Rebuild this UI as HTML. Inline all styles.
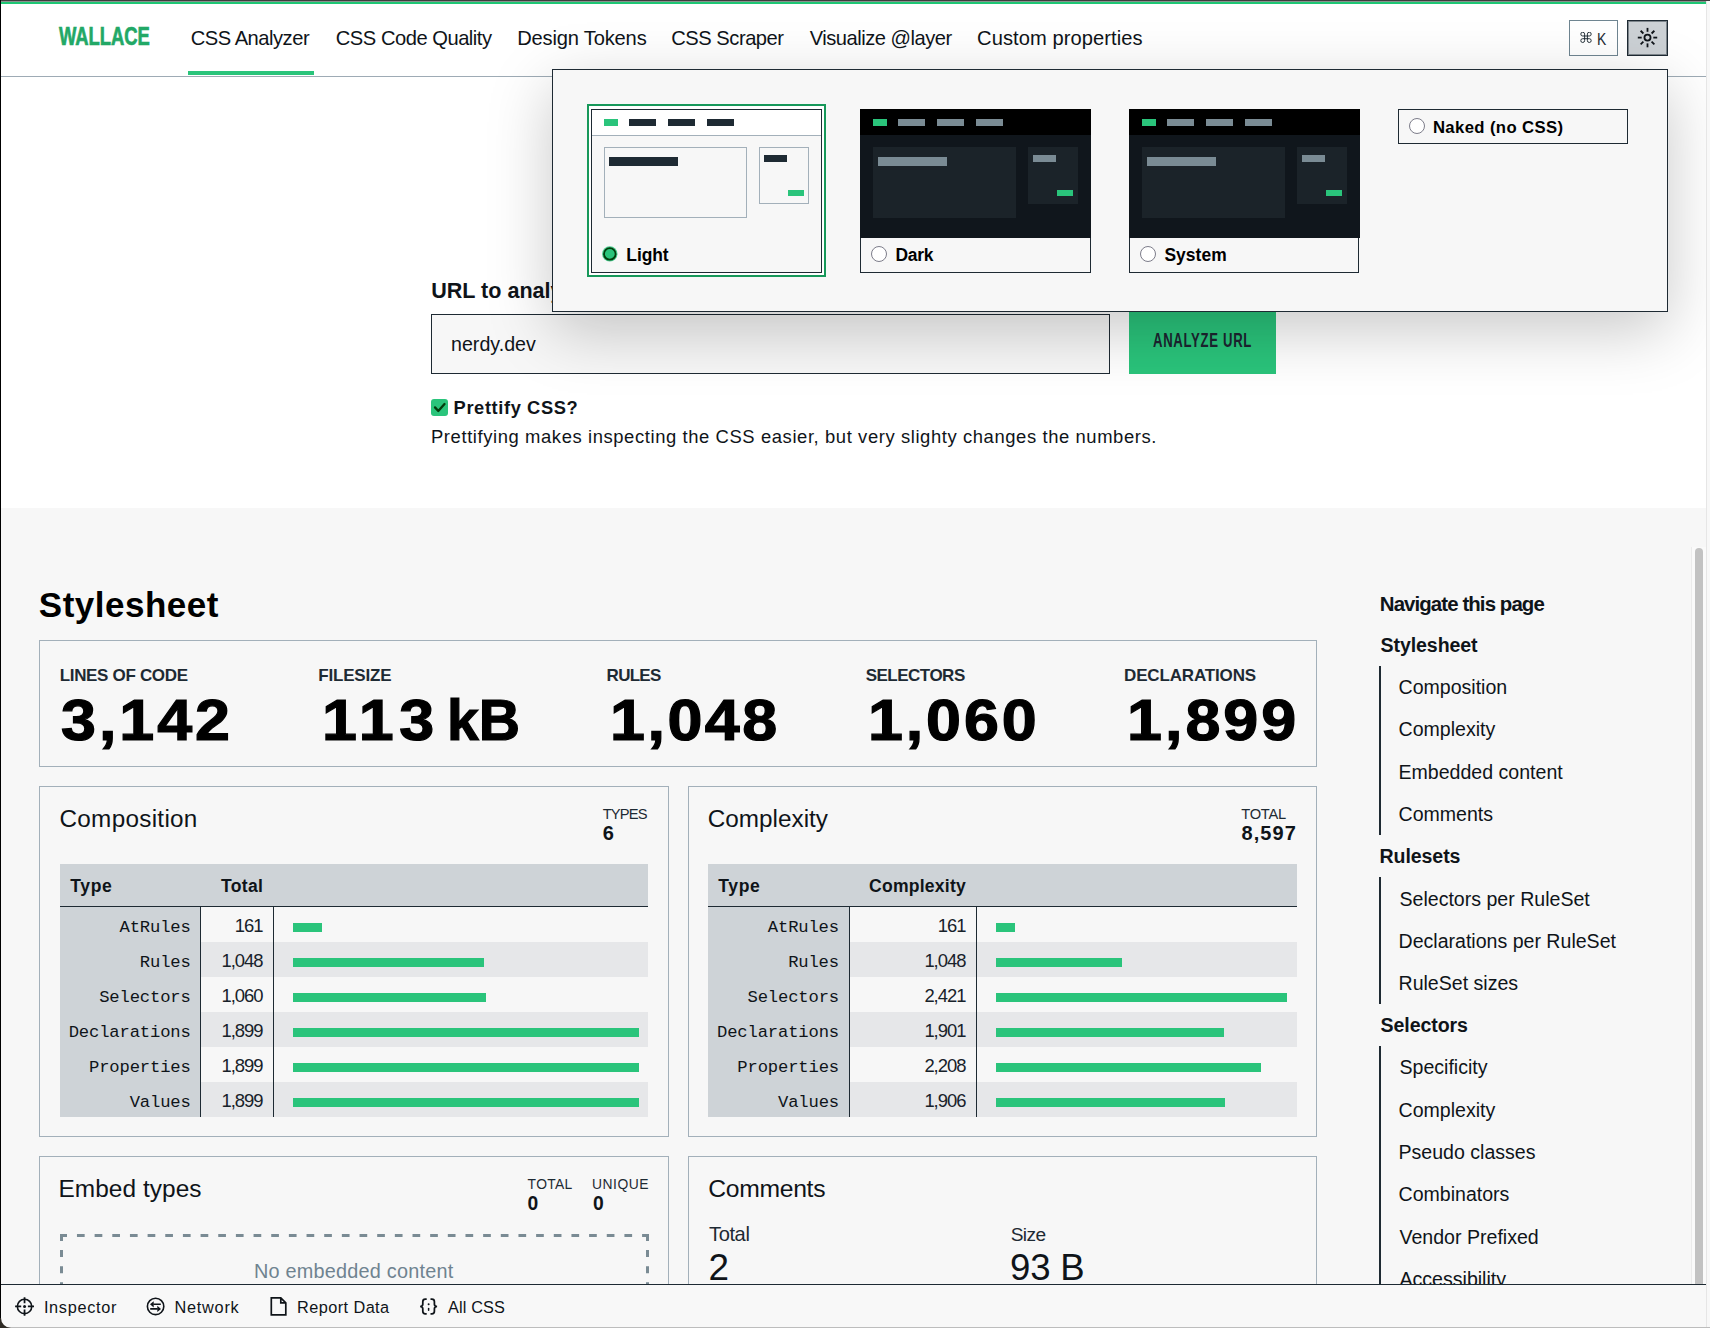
<!DOCTYPE html>
<html><head><meta charset="utf-8"><title>Wallace CSS Analyzer</title>
<style>
html,body{margin:0;padding:0;}
body{width:1710px;height:1328px;overflow:hidden;position:relative;background:#fff;font-family:'Liberation Sans', sans-serif;}
</style></head><body>
<div style="position:absolute;left:1px;top:508px;width:1705px;height:776px;background:#f7f7f7;"></div>
<div style="position:absolute;left:1px;top:76px;width:1705px;height:1px;background:#9eabb5;"></div>
<div style="position:absolute;left:188px;top:71px;width:126px;height:4px;background:#2ac47b;"></div>
<div style="position:absolute;left:1569px;top:20px;width:49px;height:36px;box-sizing:border-box;border:1px solid #6f8591;background:#fff;"></div>
<div style="position:absolute;left:1627px;top:20px;width:41px;height:36px;box-sizing:border-box;border:1px solid #1e2a33;box-shadow:inset 0 0 0 1px rgba(30,42,51,0.45);background:#ccd1d5;"></div>
<div style="position:absolute;left:431px;top:314px;width:679px;height:60px;box-sizing:border-box;border:1px solid #1e2a33;background:#f7f7f7;"></div>
<div style="position:absolute;left:1129px;top:311px;width:147px;height:63px;background:#2ac47b;"></div>
<div style="position:absolute;left:431px;top:399px;width:17px;height:17px;background:#2ac47b;border-radius:3px;"></div>
<svg style="position:absolute;left:431px;top:399px" width="17" height="17" viewBox="0 0 17 17"><path d="M4 8.4l3.3 3.6 6.2-7" fill="none" stroke="#023d0c" stroke-width="2.3" stroke-linecap="round" stroke-linejoin="round"/></svg>
<div style="position:absolute;left:39px;top:640px;width:1278px;height:127px;box-sizing:border-box;border:1px solid #a3b0ba;"></div>
<div style="position:absolute;left:39px;top:786px;width:630px;height:351px;box-sizing:border-box;border:1px solid #a3b0ba;"></div>
<div style="position:absolute;left:60px;top:864px;width:588px;height:42px;background:#ced3d7;"></div>
<div style="position:absolute;left:60px;top:906px;width:588px;height:1px;background:#1e2a33;"></div>
<div style="position:absolute;left:60px;top:907px;width:140px;height:210px;background:#ced3d7;"></div>
<div style="position:absolute;left:200px;top:907px;width:1px;height:210px;background:#1e2a33;"></div>
<div style="position:absolute;left:273px;top:907px;width:1px;height:210px;background:#1e2a33;"></div>
<div style="position:absolute;left:293px;top:923px;width:29px;height:9px;background:#2ac47b;"></div>
<div style="position:absolute;left:201px;top:942px;width:72px;height:35px;background:#e6e7e9;"></div>
<div style="position:absolute;left:274px;top:942px;width:374px;height:35px;background:#e6e7e9;"></div>
<div style="position:absolute;left:293px;top:958px;width:191px;height:9px;background:#2ac47b;"></div>
<div style="position:absolute;left:293px;top:993px;width:193px;height:9px;background:#2ac47b;"></div>
<div style="position:absolute;left:201px;top:1012px;width:72px;height:35px;background:#e6e7e9;"></div>
<div style="position:absolute;left:274px;top:1012px;width:374px;height:35px;background:#e6e7e9;"></div>
<div style="position:absolute;left:293px;top:1028px;width:346px;height:9px;background:#2ac47b;"></div>
<div style="position:absolute;left:293px;top:1063px;width:346px;height:9px;background:#2ac47b;"></div>
<div style="position:absolute;left:201px;top:1082px;width:72px;height:35px;background:#e6e7e9;"></div>
<div style="position:absolute;left:274px;top:1082px;width:374px;height:35px;background:#e6e7e9;"></div>
<div style="position:absolute;left:293px;top:1098px;width:346px;height:9px;background:#2ac47b;"></div>
<div style="position:absolute;left:688px;top:786px;width:629px;height:351px;box-sizing:border-box;border:1px solid #a3b0ba;"></div>
<div style="position:absolute;left:708px;top:864px;width:589px;height:42px;background:#ced3d7;"></div>
<div style="position:absolute;left:708px;top:906px;width:589px;height:1px;background:#1e2a33;"></div>
<div style="position:absolute;left:708px;top:907px;width:141px;height:210px;background:#ced3d7;"></div>
<div style="position:absolute;left:849px;top:907px;width:1px;height:210px;background:#1e2a33;"></div>
<div style="position:absolute;left:976px;top:907px;width:1px;height:210px;background:#1e2a33;"></div>
<div style="position:absolute;left:996px;top:923px;width:19px;height:9px;background:#2ac47b;"></div>
<div style="position:absolute;left:850px;top:942px;width:126px;height:35px;background:#e6e7e9;"></div>
<div style="position:absolute;left:977px;top:942px;width:320px;height:35px;background:#e6e7e9;"></div>
<div style="position:absolute;left:996px;top:958px;width:126px;height:9px;background:#2ac47b;"></div>
<div style="position:absolute;left:996px;top:993px;width:291px;height:9px;background:#2ac47b;"></div>
<div style="position:absolute;left:850px;top:1012px;width:126px;height:35px;background:#e6e7e9;"></div>
<div style="position:absolute;left:977px;top:1012px;width:320px;height:35px;background:#e6e7e9;"></div>
<div style="position:absolute;left:996px;top:1028px;width:228px;height:9px;background:#2ac47b;"></div>
<div style="position:absolute;left:996px;top:1063px;width:265px;height:9px;background:#2ac47b;"></div>
<div style="position:absolute;left:850px;top:1082px;width:126px;height:35px;background:#e6e7e9;"></div>
<div style="position:absolute;left:977px;top:1082px;width:320px;height:35px;background:#e6e7e9;"></div>
<div style="position:absolute;left:996px;top:1098px;width:229px;height:9px;background:#2ac47b;"></div>
<div style="position:absolute;left:39px;top:1156px;width:630px;height:244px;box-sizing:border-box;border:1px solid #a3b0ba;"></div>
<svg style="position:absolute;left:60px;top:1234px" width="589" height="60" viewBox="0 0 589 60"><g stroke="#7a8b94" stroke-width="3" fill="none"><path d="M0 1.5H589" stroke-dasharray="7.7 9.96" stroke-dashoffset="0.7"/><path d="M1.5 0V60" stroke-dasharray="7 9.1"/><path d="M587.5 0V60" stroke-dasharray="7 9.1"/></g></svg>
<div style="position:absolute;left:688px;top:1156px;width:629px;height:244px;box-sizing:border-box;border:1px solid #a3b0ba;"></div>
<div style="position:absolute;left:1379px;top:666px;width:2px;height:169px;background:#1e2a33;"></div>
<div style="position:absolute;left:1379px;top:877px;width:2px;height:127px;background:#1e2a33;"></div>
<div style="position:absolute;left:1379px;top:1046px;width:2px;height:238px;background:#1e2a33;"></div>
<div style="position:absolute;left:58.80px;top:23.00px;font-family:'Liberation Sans', sans-serif;font-size:26.29px;line-height:26.29px;font-weight:700;color:#22a866;white-space:nowrap;letter-spacing:-0.056px;transform:scaleX(0.7000);transform-origin:0 0;-webkit-text-stroke:0.7px #22a866;">WALLACE</div>
<div style="position:absolute;left:190.70px;top:28.00px;font-family:'Liberation Sans', sans-serif;font-size:20.14px;line-height:20.14px;font-weight:400;color:#0f1419;white-space:nowrap;letter-spacing:-0.479px;">CSS Analyzer</div>
<div style="position:absolute;left:335.80px;top:28.00px;font-family:'Liberation Sans', sans-serif;font-size:20.14px;line-height:20.14px;font-weight:400;color:#0f1419;white-space:nowrap;letter-spacing:-0.470px;">CSS Code Quality</div>
<div style="position:absolute;left:517.20px;top:28.00px;font-family:'Liberation Sans', sans-serif;font-size:20.14px;line-height:20.14px;font-weight:400;color:#0f1419;white-space:nowrap;letter-spacing:-0.178px;">Design Tokens</div>
<div style="position:absolute;left:671.30px;top:28.00px;font-family:'Liberation Sans', sans-serif;font-size:20.14px;line-height:20.14px;font-weight:400;color:#0f1419;white-space:nowrap;letter-spacing:-0.474px;">CSS Scraper</div>
<div style="position:absolute;left:809.70px;top:28.00px;font-family:'Liberation Sans', sans-serif;font-size:20.14px;line-height:20.14px;font-weight:400;color:#0f1419;white-space:nowrap;letter-spacing:-0.494px;">Visualize @layer</div>
<div style="position:absolute;left:977.10px;top:28.00px;font-family:'Liberation Sans', sans-serif;font-size:20.14px;line-height:20.14px;font-weight:400;color:#0f1419;white-space:nowrap;letter-spacing:0.065px;">Custom properties</div>
<div style="position:absolute;left:431.20px;top:280.00px;font-family:'Liberation Sans', sans-serif;font-size:21.57px;line-height:21.57px;font-weight:700;color:#0f1419;white-space:nowrap;">URL to analyze</div>
<div style="position:absolute;left:451.00px;top:335.00px;font-family:'Liberation Sans', sans-serif;font-size:19.64px;line-height:19.64px;font-weight:400;color:#0f1419;white-space:nowrap;letter-spacing:0.011px;">nerdy.dev</div>
<div style="position:absolute;left:1153.00px;top:331.00px;font-family:'Liberation Sans', sans-serif;font-size:19.86px;line-height:19.86px;font-weight:700;color:#1c2530;white-space:nowrap;letter-spacing:1.073px;transform:scaleX(0.6600);transform-origin:0 0;">ANALYZE URL</div>
<div style="position:absolute;left:453.60px;top:399.00px;font-family:'Liberation Sans', sans-serif;font-size:18.29px;line-height:18.29px;font-weight:700;color:#0f1419;white-space:nowrap;letter-spacing:0.603px;">Prettify CSS?</div>
<div style="position:absolute;left:431.00px;top:428.00px;font-family:'Liberation Sans', sans-serif;font-size:18.43px;line-height:18.43px;font-weight:400;color:#0f1419;white-space:nowrap;letter-spacing:0.587px;">Prettifying makes inspecting the CSS easier, but very slighty changes the numbers.</div>
<div style="position:absolute;left:38.80px;top:587.00px;font-family:'Liberation Sans', sans-serif;font-size:35.00px;line-height:35.00px;font-weight:700;color:#000;white-space:nowrap;letter-spacing:0.497px;">Stylesheet</div>
<div style="position:absolute;left:59.70px;top:667.00px;font-family:'Liberation Sans', sans-serif;font-size:17.00px;line-height:17.00px;font-weight:700;color:#1e2a33;white-space:nowrap;letter-spacing:-0.324px;">LINES OF CODE</div>
<div style="position:absolute;left:318.30px;top:667.00px;font-family:'Liberation Sans', sans-serif;font-size:17.00px;line-height:17.00px;font-weight:700;color:#1e2a33;white-space:nowrap;letter-spacing:-0.197px;">FILESIZE</div>
<div style="position:absolute;left:606.60px;top:667.00px;font-family:'Liberation Sans', sans-serif;font-size:17.00px;line-height:17.00px;font-weight:700;color:#1e2a33;white-space:nowrap;letter-spacing:-0.719px;">RULES</div>
<div style="position:absolute;left:865.70px;top:667.00px;font-family:'Liberation Sans', sans-serif;font-size:17.00px;line-height:17.00px;font-weight:700;color:#1e2a33;white-space:nowrap;letter-spacing:-0.507px;">SELECTORS</div>
<div style="position:absolute;left:1124.00px;top:667.00px;font-family:'Liberation Sans', sans-serif;font-size:17.00px;line-height:17.00px;font-weight:700;color:#1e2a33;white-space:nowrap;letter-spacing:-0.150px;">DECLARATIONS</div>
<div style="position:absolute;left:60.90px;top:692.00px;font-family:'Liberation Sans', sans-serif;font-size:57.14px;line-height:57.14px;font-weight:700;color:#000;white-space:nowrap;letter-spacing:2.682px;transform:scaleX(1.1000);transform-origin:0 0;-webkit-text-stroke:1.2px #000;">3,142</div>
<div style="position:absolute;left:322.20px;top:692.00px;font-family:'Liberation Sans', sans-serif;font-size:57.14px;line-height:57.14px;font-weight:700;color:#000;white-space:nowrap;letter-spacing:4.897px;transform:scaleX(1.1000);transform-origin:0 0;-webkit-text-stroke:1.2px #000;">113</div>
<div style="position:absolute;left:447.30px;top:692.00px;font-family:'Liberation Sans', sans-serif;font-size:57.14px;line-height:57.14px;font-weight:700;color:#000;white-space:nowrap;transform:scaleX(1.0004);transform-origin:0 0;-webkit-text-stroke:1.2px #000;">kB</div>
<div style="position:absolute;left:609.60px;top:692.00px;font-family:'Liberation Sans', sans-serif;font-size:57.14px;line-height:57.14px;font-weight:700;color:#000;white-space:nowrap;letter-spacing:2.273px;transform:scaleX(1.1000);transform-origin:0 0;-webkit-text-stroke:1.2px #000;">1,048</div>
<div style="position:absolute;left:868.00px;top:692.00px;font-family:'Liberation Sans', sans-serif;font-size:57.14px;line-height:57.14px;font-weight:700;color:#000;white-space:nowrap;letter-spacing:2.591px;transform:scaleX(1.1000);transform-origin:0 0;-webkit-text-stroke:1.2px #000;">1,060</div>
<div style="position:absolute;left:1126.80px;top:692.00px;font-family:'Liberation Sans', sans-serif;font-size:57.14px;line-height:57.14px;font-weight:700;color:#000;white-space:nowrap;letter-spacing:2.727px;transform:scaleX(1.1000);transform-origin:0 0;-webkit-text-stroke:1.2px #000;">1,899</div>
<div style="position:absolute;left:59.50px;top:807.00px;font-family:'Liberation Sans', sans-serif;font-size:24.29px;line-height:24.29px;font-weight:400;color:#0f1419;white-space:nowrap;letter-spacing:0.292px;">Composition</div>
<div style="position:absolute;left:602.70px;top:807.00px;font-family:'Liberation Sans', sans-serif;font-size:14.71px;line-height:14.71px;font-weight:400;color:#1e2a33;white-space:nowrap;letter-spacing:-0.825px;">TYPES</div>
<div style="position:absolute;left:602.80px;top:823.00px;font-family:'Liberation Sans', sans-serif;font-size:20.00px;line-height:20.00px;font-weight:700;color:#0f1419;white-space:nowrap;">6</div>
<div style="position:absolute;left:70.30px;top:878.00px;font-family:'Liberation Sans', sans-serif;font-size:17.57px;line-height:17.57px;font-weight:700;color:#0f1419;white-space:nowrap;letter-spacing:0.627px;">Type</div>
<div style="position:absolute;left:221.00px;top:878.00px;font-family:'Liberation Sans', sans-serif;font-size:17.57px;line-height:17.57px;font-weight:700;color:#0f1419;white-space:nowrap;letter-spacing:0.333px;">Total</div>
<div style="position:absolute;left:119.51px;top:919.00px;font-family:'Liberation Mono', monospace;font-size:17.20px;line-height:17.20px;font-weight:400;color:#0f1419;white-space:nowrap;letter-spacing:-0.150px;">AtRules</div>
<div style="position:absolute;left:234.83px;top:917.00px;font-family:'Liberation Sans', sans-serif;font-size:18.43px;line-height:18.43px;font-weight:400;color:#18222a;white-space:nowrap;letter-spacing:-1.000px;">161</div>
<div style="position:absolute;left:139.84px;top:954.00px;font-family:'Liberation Mono', monospace;font-size:17.20px;line-height:17.20px;font-weight:400;color:#0f1419;white-space:nowrap;letter-spacing:-0.150px;">Rules</div>
<div style="position:absolute;left:221.48px;top:952.00px;font-family:'Liberation Sans', sans-serif;font-size:18.43px;line-height:18.43px;font-weight:400;color:#18222a;white-space:nowrap;letter-spacing:-1.000px;">1,048</div>
<div style="position:absolute;left:99.19px;top:989.00px;font-family:'Liberation Mono', monospace;font-size:17.20px;line-height:17.20px;font-weight:400;color:#0f1419;white-space:nowrap;letter-spacing:-0.150px;">Selectors</div>
<div style="position:absolute;left:221.48px;top:987.00px;font-family:'Liberation Sans', sans-serif;font-size:18.43px;line-height:18.43px;font-weight:400;color:#18222a;white-space:nowrap;letter-spacing:-1.000px;">1,060</div>
<div style="position:absolute;left:68.69px;top:1024.00px;font-family:'Liberation Mono', monospace;font-size:17.20px;line-height:17.20px;font-weight:400;color:#0f1419;white-space:nowrap;letter-spacing:-0.150px;">Declarations</div>
<div style="position:absolute;left:221.48px;top:1022.00px;font-family:'Liberation Sans', sans-serif;font-size:18.43px;line-height:18.43px;font-weight:400;color:#18222a;white-space:nowrap;letter-spacing:-1.000px;">1,899</div>
<div style="position:absolute;left:89.02px;top:1059.00px;font-family:'Liberation Mono', monospace;font-size:17.20px;line-height:17.20px;font-weight:400;color:#0f1419;white-space:nowrap;letter-spacing:-0.150px;">Properties</div>
<div style="position:absolute;left:221.48px;top:1057.00px;font-family:'Liberation Sans', sans-serif;font-size:18.43px;line-height:18.43px;font-weight:400;color:#18222a;white-space:nowrap;letter-spacing:-1.000px;">1,899</div>
<div style="position:absolute;left:129.68px;top:1094.00px;font-family:'Liberation Mono', monospace;font-size:17.20px;line-height:17.20px;font-weight:400;color:#0f1419;white-space:nowrap;letter-spacing:-0.150px;">Values</div>
<div style="position:absolute;left:221.48px;top:1092.00px;font-family:'Liberation Sans', sans-serif;font-size:18.43px;line-height:18.43px;font-weight:400;color:#18222a;white-space:nowrap;letter-spacing:-1.000px;">1,899</div>
<div style="position:absolute;left:707.70px;top:807.00px;font-family:'Liberation Sans', sans-serif;font-size:24.29px;line-height:24.29px;font-weight:400;color:#0f1419;white-space:nowrap;letter-spacing:0.024px;">Complexity</div>
<div style="position:absolute;left:1241.20px;top:807.00px;font-family:'Liberation Sans', sans-serif;font-size:14.71px;line-height:14.71px;font-weight:400;color:#1e2a33;white-space:nowrap;letter-spacing:-0.262px;">TOTAL</div>
<div style="position:absolute;left:1241.60px;top:823.00px;font-family:'Liberation Sans', sans-serif;font-size:20.00px;line-height:20.00px;font-weight:700;color:#0f1419;white-space:nowrap;letter-spacing:1.044px;">8,597</div>
<div style="position:absolute;left:718.30px;top:878.00px;font-family:'Liberation Sans', sans-serif;font-size:17.57px;line-height:17.57px;font-weight:700;color:#0f1419;white-space:nowrap;letter-spacing:0.627px;">Type</div>
<div style="position:absolute;left:869.00px;top:878.00px;font-family:'Liberation Sans', sans-serif;font-size:17.57px;line-height:17.57px;font-weight:700;color:#0f1419;white-space:nowrap;letter-spacing:0.234px;">Complexity</div>
<div style="position:absolute;left:767.81px;top:919.00px;font-family:'Liberation Mono', monospace;font-size:17.20px;line-height:17.20px;font-weight:400;color:#0f1419;white-space:nowrap;letter-spacing:-0.150px;">AtRules</div>
<div style="position:absolute;left:937.73px;top:917.00px;font-family:'Liberation Sans', sans-serif;font-size:18.43px;line-height:18.43px;font-weight:400;color:#18222a;white-space:nowrap;letter-spacing:-1.000px;">161</div>
<div style="position:absolute;left:788.14px;top:954.00px;font-family:'Liberation Mono', monospace;font-size:17.20px;line-height:17.20px;font-weight:400;color:#0f1419;white-space:nowrap;letter-spacing:-0.150px;">Rules</div>
<div style="position:absolute;left:924.38px;top:952.00px;font-family:'Liberation Sans', sans-serif;font-size:18.43px;line-height:18.43px;font-weight:400;color:#18222a;white-space:nowrap;letter-spacing:-1.000px;">1,048</div>
<div style="position:absolute;left:747.49px;top:989.00px;font-family:'Liberation Mono', monospace;font-size:17.20px;line-height:17.20px;font-weight:400;color:#0f1419;white-space:nowrap;letter-spacing:-0.150px;">Selectors</div>
<div style="position:absolute;left:924.38px;top:987.00px;font-family:'Liberation Sans', sans-serif;font-size:18.43px;line-height:18.43px;font-weight:400;color:#18222a;white-space:nowrap;letter-spacing:-1.000px;">2,421</div>
<div style="position:absolute;left:716.99px;top:1024.00px;font-family:'Liberation Mono', monospace;font-size:17.20px;line-height:17.20px;font-weight:400;color:#0f1419;white-space:nowrap;letter-spacing:-0.150px;">Declarations</div>
<div style="position:absolute;left:924.38px;top:1022.00px;font-family:'Liberation Sans', sans-serif;font-size:18.43px;line-height:18.43px;font-weight:400;color:#18222a;white-space:nowrap;letter-spacing:-1.000px;">1,901</div>
<div style="position:absolute;left:737.32px;top:1059.00px;font-family:'Liberation Mono', monospace;font-size:17.20px;line-height:17.20px;font-weight:400;color:#0f1419;white-space:nowrap;letter-spacing:-0.150px;">Properties</div>
<div style="position:absolute;left:924.38px;top:1057.00px;font-family:'Liberation Sans', sans-serif;font-size:18.43px;line-height:18.43px;font-weight:400;color:#18222a;white-space:nowrap;letter-spacing:-1.000px;">2,208</div>
<div style="position:absolute;left:777.98px;top:1094.00px;font-family:'Liberation Mono', monospace;font-size:17.20px;line-height:17.20px;font-weight:400;color:#0f1419;white-space:nowrap;letter-spacing:-0.150px;">Values</div>
<div style="position:absolute;left:924.38px;top:1092.00px;font-family:'Liberation Sans', sans-serif;font-size:18.43px;line-height:18.43px;font-weight:400;color:#18222a;white-space:nowrap;letter-spacing:-1.000px;">1,906</div>
<div style="position:absolute;left:58.50px;top:1177.00px;font-family:'Liberation Sans', sans-serif;font-size:24.43px;line-height:24.43px;font-weight:400;color:#0f1419;white-space:nowrap;letter-spacing:0.046px;">Embed types</div>
<div style="position:absolute;left:527.60px;top:1178.00px;font-family:'Liberation Sans', sans-serif;font-size:13.86px;line-height:13.86px;font-weight:400;color:#1e2a33;white-space:nowrap;letter-spacing:0.316px;">TOTAL</div>
<div style="position:absolute;left:592.00px;top:1178.00px;font-family:'Liberation Sans', sans-serif;font-size:13.86px;line-height:13.86px;font-weight:400;color:#1e2a33;white-space:nowrap;letter-spacing:0.519px;">UNIQUE</div>
<div style="position:absolute;left:527.60px;top:1194.00px;font-family:'Liberation Sans', sans-serif;font-size:19.29px;line-height:19.29px;font-weight:700;color:#0f1419;white-space:nowrap;">0</div>
<div style="position:absolute;left:593.00px;top:1194.00px;font-family:'Liberation Sans', sans-serif;font-size:19.29px;line-height:19.29px;font-weight:700;color:#0f1419;white-space:nowrap;">0</div>
<div style="position:absolute;left:254.00px;top:1262.00px;font-family:'Liberation Sans', sans-serif;font-size:19.86px;line-height:19.86px;font-weight:400;color:#6f8390;white-space:nowrap;letter-spacing:0.214px;">No embedded content</div>
<div style="position:absolute;left:708.20px;top:1177.00px;font-family:'Liberation Sans', sans-serif;font-size:24.71px;line-height:24.71px;font-weight:400;color:#0f1419;white-space:nowrap;letter-spacing:-0.296px;">Comments</div>
<div style="position:absolute;left:709.00px;top:1224.00px;font-family:'Liberation Sans', sans-serif;font-size:20.14px;line-height:20.14px;font-weight:400;color:#1e2a33;white-space:nowrap;letter-spacing:-0.409px;">Total</div>
<div style="position:absolute;left:1010.70px;top:1225.00px;font-family:'Liberation Sans', sans-serif;font-size:19.14px;line-height:19.14px;font-weight:400;color:#1e2a33;white-space:nowrap;letter-spacing:-0.623px;">Size</div>
<div style="position:absolute;left:708.60px;top:1250.00px;font-family:'Liberation Sans', sans-serif;font-size:36.86px;line-height:36.86px;font-weight:400;color:#0f1419;white-space:nowrap;">2</div>
<div style="position:absolute;left:1010.00px;top:1250.00px;font-family:'Liberation Sans', sans-serif;font-size:36.57px;line-height:36.57px;font-weight:400;color:#0f1419;white-space:nowrap;letter-spacing:-0.176px;">93 B</div>
<div style="position:absolute;left:1379.80px;top:594.00px;font-family:'Liberation Sans', sans-serif;font-size:20.43px;line-height:20.43px;font-weight:700;color:#0f1419;white-space:nowrap;letter-spacing:-0.909px;">Navigate this page</div>
<div style="position:absolute;left:1380.60px;top:636.00px;font-family:'Liberation Sans', sans-serif;font-size:19.57px;line-height:19.57px;font-weight:700;color:#0f1419;white-space:nowrap;letter-spacing:-0.100px;">Stylesheet</div>
<div style="position:absolute;left:1398.50px;top:678.00px;font-family:'Liberation Sans', sans-serif;font-size:19.57px;line-height:19.57px;font-weight:400;color:#0f1419;white-space:nowrap;">Composition</div>
<div style="position:absolute;left:1398.50px;top:720.00px;font-family:'Liberation Sans', sans-serif;font-size:19.57px;line-height:19.57px;font-weight:400;color:#0f1419;white-space:nowrap;">Complexity</div>
<div style="position:absolute;left:1398.50px;top:763.00px;font-family:'Liberation Sans', sans-serif;font-size:19.57px;line-height:19.57px;font-weight:400;color:#0f1419;white-space:nowrap;">Embedded content</div>
<div style="position:absolute;left:1398.50px;top:805.00px;font-family:'Liberation Sans', sans-serif;font-size:19.57px;line-height:19.57px;font-weight:400;color:#0f1419;white-space:nowrap;">Comments</div>
<div style="position:absolute;left:1379.60px;top:847.00px;font-family:'Liberation Sans', sans-serif;font-size:19.57px;line-height:19.57px;font-weight:700;color:#0f1419;white-space:nowrap;letter-spacing:-0.100px;">Rulesets</div>
<div style="position:absolute;left:1399.50px;top:890.00px;font-family:'Liberation Sans', sans-serif;font-size:19.57px;line-height:19.57px;font-weight:400;color:#0f1419;white-space:nowrap;">Selectors per RuleSet</div>
<div style="position:absolute;left:1398.50px;top:932.00px;font-family:'Liberation Sans', sans-serif;font-size:19.57px;line-height:19.57px;font-weight:400;color:#0f1419;white-space:nowrap;">Declarations per RuleSet</div>
<div style="position:absolute;left:1398.50px;top:974.00px;font-family:'Liberation Sans', sans-serif;font-size:19.57px;line-height:19.57px;font-weight:400;color:#0f1419;white-space:nowrap;">RuleSet sizes</div>
<div style="position:absolute;left:1380.60px;top:1016.00px;font-family:'Liberation Sans', sans-serif;font-size:19.57px;line-height:19.57px;font-weight:700;color:#0f1419;white-space:nowrap;letter-spacing:-0.100px;">Selectors</div>
<div style="position:absolute;left:1399.50px;top:1058.00px;font-family:'Liberation Sans', sans-serif;font-size:19.57px;line-height:19.57px;font-weight:400;color:#0f1419;white-space:nowrap;">Specificity</div>
<div style="position:absolute;left:1398.50px;top:1101.00px;font-family:'Liberation Sans', sans-serif;font-size:19.57px;line-height:19.57px;font-weight:400;color:#0f1419;white-space:nowrap;">Complexity</div>
<div style="position:absolute;left:1398.50px;top:1143.00px;font-family:'Liberation Sans', sans-serif;font-size:19.57px;line-height:19.57px;font-weight:400;color:#0f1419;white-space:nowrap;">Pseudo classes</div>
<div style="position:absolute;left:1398.50px;top:1185.00px;font-family:'Liberation Sans', sans-serif;font-size:19.57px;line-height:19.57px;font-weight:400;color:#0f1419;white-space:nowrap;">Combinators</div>
<div style="position:absolute;left:1399.50px;top:1228.00px;font-family:'Liberation Sans', sans-serif;font-size:19.57px;line-height:19.57px;font-weight:400;color:#0f1419;white-space:nowrap;">Vendor Prefixed</div>
<div style="position:absolute;left:1399.50px;top:1270.00px;font-family:'Liberation Sans', sans-serif;font-size:19.57px;line-height:19.57px;font-weight:400;color:#0f1419;white-space:nowrap;">Accessibility</div>
<svg style="position:absolute;left:1580px;top:32px" width="12" height="12" viewBox="0 0 12 12"><path d="M4.6 8.6V2.1A1.9 1.9 0 1 0 2.7 4H9.3A1.9 1.9 0 1 0 7.4 2.1V8.6A1.9 1.9 0 1 0 9.3 6.7H2.7A1.9 1.9 0 1 0 4.6 8.6" fill="none" stroke="#1e2a33" stroke-width="0.95"/></svg>
<svg style="position:absolute;left:1634px;top:25px" width="27" height="27" viewBox="0 0 27 27"><g stroke="#0f1419" stroke-width="1.8" fill="none" stroke-linecap="butt"><circle cx="13.5" cy="12.6" r="3.05"/><line x1="13.50" y1="6.80" x2="13.50" y2="2.90"/><line x1="17.60" y1="8.50" x2="20.36" y2="5.74"/><line x1="19.30" y1="12.60" x2="23.20" y2="12.60"/><line x1="17.60" y1="16.70" x2="20.36" y2="19.46"/><line x1="13.50" y1="18.40" x2="13.50" y2="22.30"/><line x1="9.40" y1="16.70" x2="6.64" y2="19.46"/><line x1="7.70" y1="12.60" x2="3.80" y2="12.60"/><line x1="9.40" y1="8.50" x2="6.64" y2="5.74"/></g></svg>
<div style="position:absolute;left:1597.19px;top:31.00px;font-family:'Liberation Sans', sans-serif;font-size:17.14px;line-height:17.14px;font-weight:400;color:#1e2a33;white-space:nowrap;transform:scaleX(0.8091);transform-origin:0 0;">K</div>
<div style="position:absolute;left:1691px;top:547px;width:15px;height:737px;background:#fafafa;border-left:1px solid #ebebeb;box-sizing:border-box;"></div>
<div style="position:absolute;left:1695px;top:548px;width:8px;height:752px;background:#c2c2c2;border-radius:4px;"></div>
<div style="position:absolute;left:552px;top:69px;width:1116px;height:243px;box-sizing:border-box;border:1px solid #1e2a33;background:#f7f7f7;box-shadow:0 18px 60px rgba(0,0,0,0.22);"></div>
<div style="position:absolute;left:587px;top:104px;width:239px;height:173px;box-sizing:border-box;border:2px solid #17985a;background:#fff;"></div>
<div style="position:absolute;left:591px;top:109px;width:231px;height:164px;box-sizing:border-box;border:1px solid #1e2a33;background:#f7f7f7;"></div>
<div style="position:absolute;left:592px;top:110px;width:229px;height:25px;background:#fff;"></div>
<div style="position:absolute;left:592px;top:135px;width:229px;height:1px;background:#a3b0ba;"></div>
<div style="position:absolute;left:604px;top:119px;width:14px;height:7px;background:#2ac47b;"></div>
<div style="position:absolute;left:629px;top:119px;width:27px;height:7px;background:#1e2a33;"></div>
<div style="position:absolute;left:668px;top:119px;width:27px;height:7px;background:#1e2a33;"></div>
<div style="position:absolute;left:707px;top:119px;width:27px;height:7px;background:#1e2a33;"></div>
<div style="position:absolute;left:604px;top:147px;width:143px;height:71px;box-sizing:border-box;border:1px solid #a3b0ba;"></div>
<div style="position:absolute;left:609px;top:157px;width:69px;height:9px;background:#1e2a33;"></div>
<div style="position:absolute;left:759px;top:147px;width:50px;height:57px;box-sizing:border-box;border:1px solid #a3b0ba;"></div>
<div style="position:absolute;left:764px;top:155px;width:23px;height:7px;background:#1e2a33;"></div>
<div style="position:absolute;left:788px;top:190px;width:16px;height:6px;background:#2ac47b;"></div>
<div style="position:absolute;left:860px;top:109px;width:231px;height:164px;box-sizing:border-box;border:1px solid #1e2a33;background:#f7f7f7;"></div>
<div style="position:absolute;left:860px;top:109px;width:231px;height:129px;background:#10161c;"></div>
<div style="position:absolute;left:860px;top:109px;width:231px;height:26px;background:#000;"></div>
<div style="position:absolute;left:873px;top:119px;width:14px;height:7px;background:#2ac47b;"></div>
<div style="position:absolute;left:898px;top:119px;width:27px;height:7px;background:#7a8b94;"></div>
<div style="position:absolute;left:937px;top:119px;width:27px;height:7px;background:#7a8b94;"></div>
<div style="position:absolute;left:976px;top:119px;width:27px;height:7px;background:#7a8b94;"></div>
<div style="position:absolute;left:873px;top:147px;width:143px;height:71px;background:#1b2329;"></div>
<div style="position:absolute;left:878px;top:157px;width:69px;height:9px;background:#7a8b94;"></div>
<div style="position:absolute;left:1028px;top:147px;width:50px;height:57px;background:#1b2329;"></div>
<div style="position:absolute;left:1033px;top:155px;width:23px;height:7px;background:#7a8b94;"></div>
<div style="position:absolute;left:1057px;top:190px;width:16px;height:6px;background:#2ac47b;"></div>
<div style="position:absolute;left:1129px;top:109px;width:230px;height:164px;box-sizing:border-box;border:1px solid #1e2a33;background:#f7f7f7;"></div>
<div style="position:absolute;left:1129px;top:109px;width:231px;height:129px;background:#10161c;"></div>
<div style="position:absolute;left:1129px;top:109px;width:231px;height:26px;background:#000;"></div>
<div style="position:absolute;left:1142px;top:119px;width:14px;height:7px;background:#2ac47b;"></div>
<div style="position:absolute;left:1167px;top:119px;width:27px;height:7px;background:#7a8b94;"></div>
<div style="position:absolute;left:1206px;top:119px;width:27px;height:7px;background:#7a8b94;"></div>
<div style="position:absolute;left:1245px;top:119px;width:27px;height:7px;background:#7a8b94;"></div>
<div style="position:absolute;left:1142px;top:147px;width:143px;height:71px;background:#1b2329;"></div>
<div style="position:absolute;left:1147px;top:157px;width:69px;height:9px;background:#7a8b94;"></div>
<div style="position:absolute;left:1297px;top:147px;width:50px;height:57px;background:#1b2329;"></div>
<div style="position:absolute;left:1302px;top:155px;width:23px;height:7px;background:#7a8b94;"></div>
<div style="position:absolute;left:1326px;top:190px;width:16px;height:6px;background:#2ac47b;"></div>
<div style="position:absolute;left:1398px;top:109px;width:230px;height:35px;box-sizing:border-box;border:1px solid #1e2a33;background:#f7f7f7;"></div>
<svg style="position:absolute;left:600px;top:244px" width="20" height="20" viewBox="0 0 20 20"><circle cx="9.8" cy="9.9" r="7.7" fill="#2ac47b" opacity="0.85"/><circle cx="9.8" cy="9.9" r="5.8" fill="#2ac47b" stroke="#023d0c" stroke-width="1.8"/></svg>
<div style="position:absolute;left:871px;top:246px;width:16px;height:16px;box-sizing:border-box;border:1px solid #7d7d8a;border-radius:50%;background:#fff;"></div>
<div style="position:absolute;left:1140px;top:246px;width:16px;height:16px;box-sizing:border-box;border:1px solid #7d7d8a;border-radius:50%;background:#fff;"></div>
<div style="position:absolute;left:1409px;top:118px;width:16px;height:16px;box-sizing:border-box;border:1px solid #7d7d8a;border-radius:50%;background:#fff;"></div>
<div style="position:absolute;left:626.30px;top:247.00px;font-family:'Liberation Sans', sans-serif;font-size:17.43px;line-height:17.43px;font-weight:700;color:#000;white-space:nowrap;letter-spacing:-0.058px;">Light</div>
<div style="position:absolute;left:895.50px;top:247.00px;font-family:'Liberation Sans', sans-serif;font-size:17.43px;line-height:17.43px;font-weight:700;color:#000;white-space:nowrap;letter-spacing:-0.242px;">Dark</div>
<div style="position:absolute;left:1164.40px;top:247.00px;font-family:'Liberation Sans', sans-serif;font-size:17.43px;line-height:17.43px;font-weight:700;color:#000;white-space:nowrap;letter-spacing:0.070px;">System</div>
<div style="position:absolute;left:1432.90px;top:120.00px;font-family:'Liberation Sans', sans-serif;font-size:16.71px;line-height:16.71px;font-weight:700;color:#000;white-space:nowrap;letter-spacing:0.383px;">Naked (no CSS)</div>
<div style="position:absolute;left:1px;top:1284px;width:1705px;height:43px;background:#f8f8f8;border-top:1px solid #1e2a33;box-sizing:border-box;"></div>
<svg style="position:absolute;left:14px;top:1296px" width="21" height="21" viewBox="0 0 21 21"><g fill="none" stroke="#0f1419" stroke-width="1.6"><circle cx="10.55" cy="10.45" r="7.2"/><path d="M10.55 1.2v6.1M10.55 13.6v6.1M1.1 10.45h6.1M13.9 10.45h6.1" stroke-width="1.75"/></g><circle cx="10.55" cy="10.45" r="1.5" fill="#0f1419"/></svg>
<svg style="position:absolute;left:145px;top:1296px" width="21" height="21" viewBox="0 0 21 21"><circle cx="10.6" cy="10.4" r="8.2" fill="none" stroke="#0f1419" stroke-width="1.6"/><path d="M8.4 8.3h7.4M5.2 12.9h7.4" stroke="#0f1419" stroke-width="1.6" fill="none"/><path d="M5 8.3l3.7-3.1v6.2z M16 12.9l-3.7-3.1v6.2z" fill="#0f1419"/></svg>
<svg style="position:absolute;left:268px;top:1296px" width="20" height="21" viewBox="0 0 20 21"><path d="M3.3 1.8H12.8L17.8 6.8V18.9H3.3Z M12.8 1.8V6.8H17.8" fill="none" stroke="#0f1419" stroke-width="1.7"/></svg>
<svg style="position:absolute;left:418px;top:1296px" width="21" height="21" viewBox="0 0 21 21"><path d="M8.7 3.2H7.3C5.6 3.2 4.8 4.2 4.8 5.8V8.3C4.8 9.6 4 10.3 2.2 10.5 4 10.7 4.8 11.4 4.8 12.7V15.2C4.8 16.8 5.6 17.8 7.3 17.8H8.7M12.5 3.2H13.9C15.6 3.2 16.4 4.2 16.4 5.8V8.3C16.4 9.6 17.2 10.3 19 10.5 17.2 10.7 16.4 11.4 16.4 12.7V15.2C16.4 16.8 15.6 17.8 13.9 17.8H12.5" fill="none" stroke="#0f1419" stroke-width="1.75"/><circle cx="10.6" cy="8.2" r="1" fill="#0f1419"/><path d="M10.6 12.6V14.2" stroke="#0f1419" stroke-width="1.5" stroke-linecap="round"/></svg>
<div style="position:absolute;left:43.90px;top:1299.00px;font-family:'Liberation Sans', sans-serif;font-size:16.29px;line-height:16.29px;font-weight:400;color:#0f1419;white-space:nowrap;letter-spacing:0.701px;">Inspector</div>
<div style="position:absolute;left:174.60px;top:1299.00px;font-family:'Liberation Sans', sans-serif;font-size:16.29px;line-height:16.29px;font-weight:400;color:#0f1419;white-space:nowrap;letter-spacing:0.730px;">Network</div>
<div style="position:absolute;left:297.00px;top:1299.00px;font-family:'Liberation Sans', sans-serif;font-size:16.29px;line-height:16.29px;font-weight:400;color:#0f1419;white-space:nowrap;letter-spacing:0.435px;">Report Data</div>
<div style="position:absolute;left:448.00px;top:1299.00px;font-family:'Liberation Sans', sans-serif;font-size:16.29px;line-height:16.29px;font-weight:400;color:#0f1419;white-space:nowrap;letter-spacing:0.135px;">All CSS</div>
<div style="position:absolute;left:1706px;top:0px;width:1px;height:1328px;background:#e6e6e6;"></div>
<div style="position:absolute;left:1707px;top:0px;width:3px;height:1328px;background:#f8f8f8;"></div>
<div style="position:absolute;left:0px;top:0px;width:1710px;height:1px;background:#3d3d3d;"></div>
<div style="position:absolute;left:0px;top:1px;width:1706px;height:1px;background:#8a928e;"></div>
<div style="position:absolute;left:1px;top:2px;width:1705px;height:2px;background:#1ec674;"></div>
<div style="position:absolute;left:0px;top:0px;width:1px;height:1328px;background:#000;"></div>
<div style="position:absolute;left:0px;top:1327px;width:1710px;height:1px;background:#bdbdbd;"></div>
<svg style="position:absolute;left:0;top:1314px" width="16" height="14" viewBox="0 0 16 14"><path d="M0 4V14H11A10 10 0 0 1 1 4z" fill="#2e2a24"/></svg>
</body></html>
